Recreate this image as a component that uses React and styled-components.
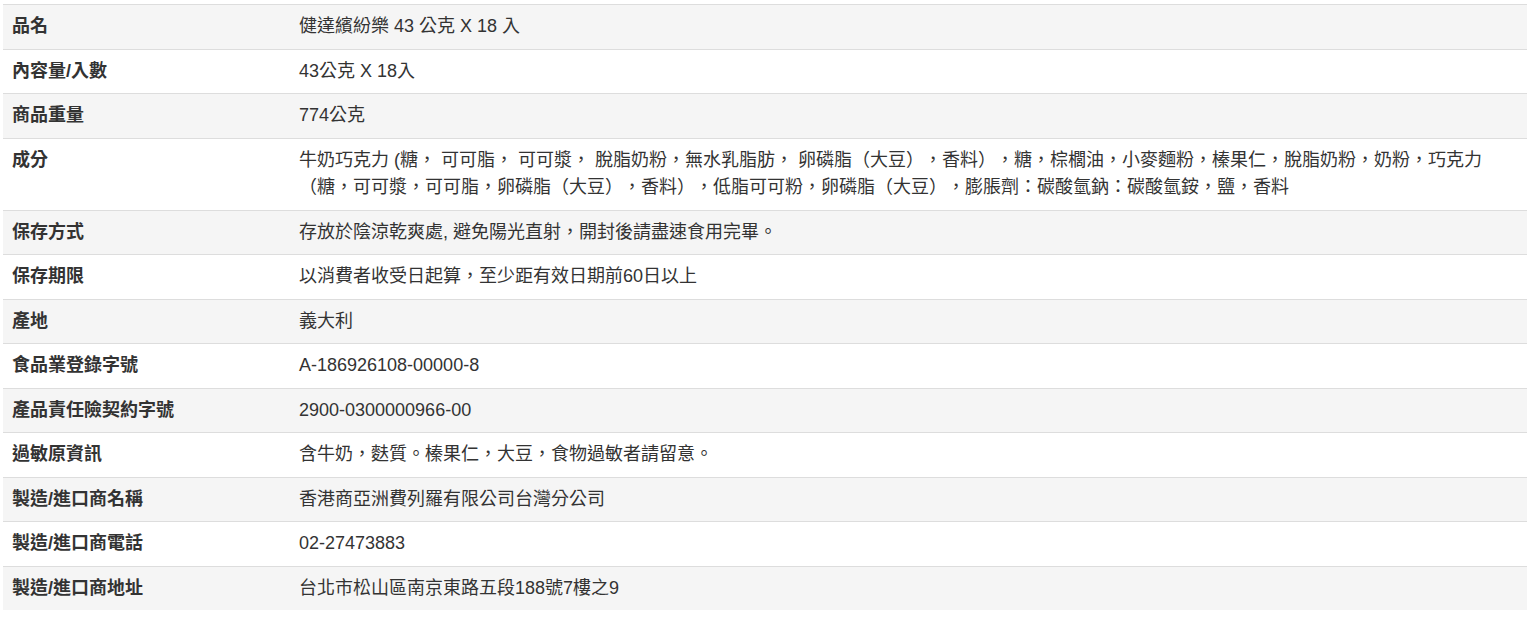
import React from "react";
import styled, { createGlobalStyle } from "styled-components";

const GlobalStyle = createGlobalStyle`
  html, body {
    margin: 0;
    padding: 0;
    background: #fff;
  }
  body {
    font-family: "Liberation Sans", "Noto Sans CJK TC", sans-serif;
    color: #333;
  }
`;

const SpecWrapper = styled.div`
  padding: 4px 4px 0 3px;
`;

const SpecTable = styled.table`
  width: 100%;
  border-collapse: collapse;
  border-spacing: 0;
  table-layout: fixed;
  font-size: 18px;
  line-height: 27.5px;
  text-spacing-trim: space-all;
`;

const SpecRow = styled.tr`
  background: ${(p) => (p.$striped ? "#f5f5f5" : "#fff")};
`;

const LabelCell = styled.th`
  box-sizing: border-box;
  width: 287px;
  text-align: left;
  vertical-align: top;
  font-weight: bold;
  color: #333;
  padding: 8px 9px;
  border-top: 1px solid #ddd;
`;

const ValueCell = styled.td`
  box-sizing: border-box;
  vertical-align: top;
  color: #333;
  padding: 8px 9px;
  border-top: 1px solid #ddd;
`;

const specs = [
  ["品名", "健達繽紛樂 43 公克 X 18 入"],
  ["內容量/入數", "43公克 X 18入"],
  ["商品重量", "774公克"],
  [
    "成分",
    "牛奶巧克力 (糖， 可可脂， 可可漿， 脫脂奶粉，無水乳脂肪， 卵磷脂（大豆），香料），糖，棕櫚油，小麥麵粉，榛果仁，脫脂奶粉，奶粉，巧克力（糖，可可漿，可可脂，卵磷脂（大豆），香料），低脂可可粉，卵磷脂（大豆），膨脹劑：碳酸氫鈉：碳酸氫銨，鹽，香料",
  ],
  ["保存方式", "存放於陰涼乾爽處, 避免陽光直射，開封後請盡速食用完畢。"],
  ["保存期限", "以消費者收受日起算，至少距有效日期前60日以上"],
  ["產地", "義大利"],
  ["食品業登錄字號", "A-186926108-00000-8"],
  ["產品責任險契約字號", "2900-0300000966-00"],
  ["過敏原資訊", "含牛奶，麩質。榛果仁，大豆，食物過敏者請留意。"],
  ["製造/進口商名稱", "香港商亞洲費列羅有限公司台灣分公司"],
  ["製造/進口商電話", "02-27473883"],
  ["製造/進口商地址", "台北市松山區南京東路五段188號7樓之9"],
];

export default function App() {
  return (
    <>
      <GlobalStyle />
      <SpecWrapper>
        <SpecTable>
          <tbody>
            {specs.map(([label, value], i) => (
              <SpecRow key={label} $striped={i % 2 === 0}>
                <LabelCell>{label}</LabelCell>
                <ValueCell>{value}</ValueCell>
              </SpecRow>
            ))}
          </tbody>
        </SpecTable>
      </SpecWrapper>
    </>
  );
}
